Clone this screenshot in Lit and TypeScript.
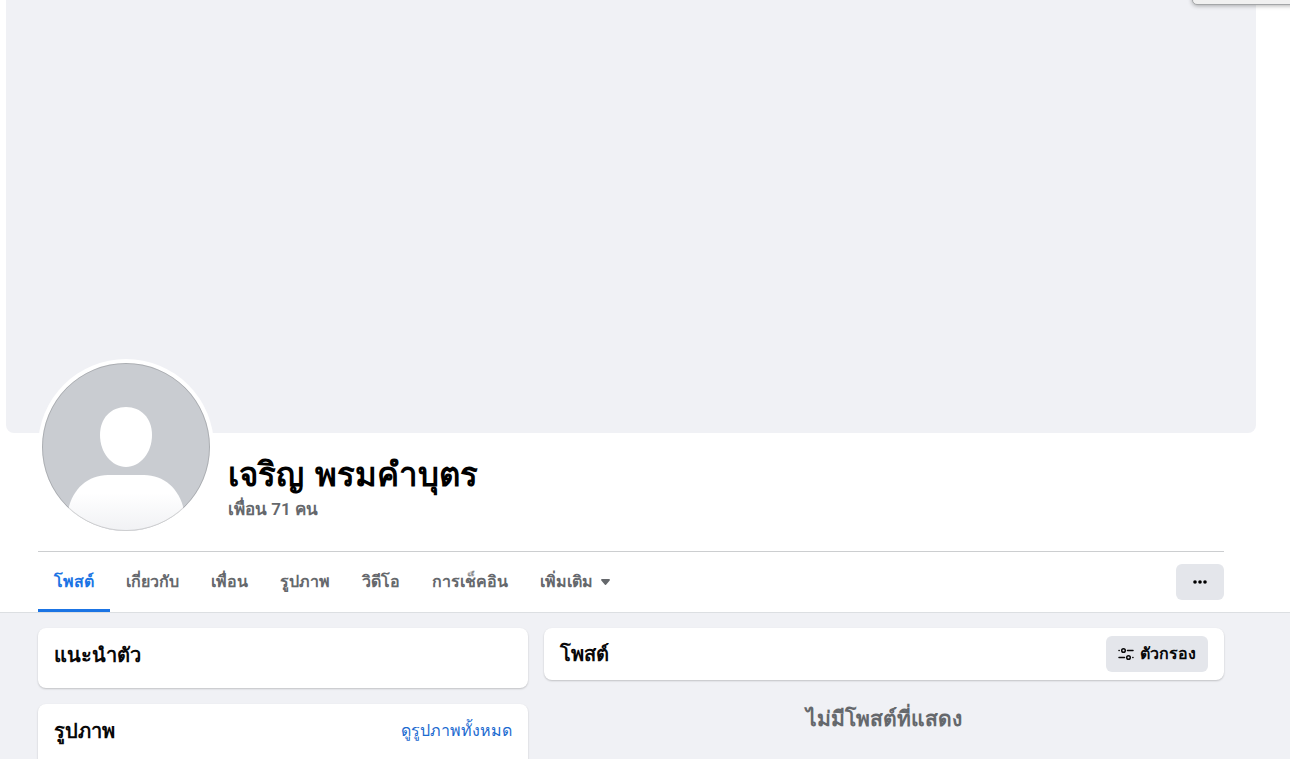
import { LitElement, html, css } from "lit";
import { customElement, state } from "lit/decorators.js";
import { classMap } from "lit/directives/class-map.js";

const TABS = ["โพสต์", "เกี่ยวกับ", "เพื่อน", "รูปภาพ", "วิดีโอ", "การเช็คอิน"];

@customElement("app-root")
export class AppRoot extends LitElement {
  static styles = css`
    :host {
      display: block;
      position: relative;
      min-height: 100vh;
      overflow: hidden;
      background: #f0f1f5;
      color: #080809;
      font-family: Roboto, "Liberation Sans", sans-serif;
      font-size: 16px;
      line-height: 20px;
    }
    h1, h2, p { margin: 0; }
    button { font: inherit; color: inherit; border: 0; cursor: pointer; }
    .header {
      background: #fff;
      padding-right: 28px;
      border-bottom: 1px solid #dcdfe2;
    }
    .frame { max-width: 1250px; margin: 0 auto; box-sizing: border-box; }
    .cover {
      height: 433px;
      background: #f0f1f5;
      border-radius: 0 0 8px 8px;
    }
    .inner { margin: 0 32px; }
    .profile {
      display: flex;
      gap: 14px;
      margin-top: -74px;
      padding-bottom: 16px;
      border-bottom: 1px solid #ccced0;
    }
    .avatar { display: block; width: 176px; height: 176px; flex: none; }
    .who { padding-top: 94px; }
    .name { font-family: "DejaVu Sans", sans-serif; font-size: 33px; line-height: 44px; font-weight: 700; color: #000; }
    .friends { display: block; font-size: 17px; line-height: 24px; font-weight: 600; color: #65686c; text-decoration: none; }
    .bar { display: flex; align-items: center; justify-content: space-between; }
    .tabs { display: flex; }
    .tab {
      display: flex;
      align-items: center;
      gap: 8px;
      height: 60px;
      box-sizing: border-box;
      padding: 3px 16px 0;
      border-bottom: 3px solid transparent;
      background: none;
      color: #65686c;
      font-weight: 600;
      white-space: nowrap;
    }
    .active { color: #1b74e4; border-bottom-color: #1b74e4; }
    .soft {
      display: flex;
      align-items: center;
      justify-content: center;
      gap: 6px;
      height: 36px;
      padding: 0 12px;
      border-radius: 6px;
      background: #e4e6eb;
      font-weight: 600;
    }
    .dots { width: 48px; }
    .body { padding-right: 28px; }
    .columns {
      display: grid;
      grid-template-columns: 490fr 680fr;
      gap: 16px;
      padding: 15px 32px 0;
      align-items: start;
    }
    .column { display: grid; gap: 16px; }
    .card {
      display: flex;
      justify-content: space-between;
      background: #fff;
      border-radius: 8px;
      box-shadow: 0 1px 2px rgba(0, 0, 0, 0.2);
      padding: 15px 16px 17px;
    }
    .intro { min-height: 28px; }
    .photos { min-height: 64px; }
    .posts { padding: 8px 16px; align-items: center; }
    .title { font-size: 20px; line-height: 24px; font-weight: 700; }
    .all { font-size: 16px; line-height: 24px; color: #1b6ad0; text-decoration: none; }
    .empty { font-size: 21px; line-height: 24px; padding-top: 11px; font-weight: 700; color: #65686c; text-align: center; }
    .popup {
      position: absolute;
      top: -20px;
      right: -10px;
      width: 106px;
      height: 23px;
      background: #f0f0f0;
      border: 1px solid #a4a6a8;
      border-radius: 5px;
      box-shadow: 0 1px 4px rgba(0, 0, 0, 0.3);
    }
  `;

  @state() private current = 0;

  render() {
    return html`
      <header class="header">
        <div class="frame">
          <div class="cover"></div>
          <div class="inner">
            <div class="profile">
              <svg class="avatar" viewBox="0 0 176 176" aria-hidden="true">
                <defs>
                  <clipPath id="face"><circle cx="88" cy="88" r="84" /></clipPath>
                  <linearGradient id="fade" x1="0" y1="0" x2="0" y2="1">
                    <stop offset="0.3" stop-color="#fff" />
                    <stop offset="1" stop-color="#eff0f3" />
                  </linearGradient>
                </defs>
                <circle cx="88" cy="88" r="88" fill="#fff" />
                <g clip-path="url(#face)">
                  <rect width="176" height="176" fill="#c9ccd1" />
                  <path fill="#fff" d="M88 48c15 0 26 11 26 28 0 18-12 32-26 32S62 94 62 76c0-17 11-28 26-28z" />
                  <path fill="url(#fade)" d="M30 152c4-22 20-36 40-36h36c20 0 36 14 40 36v24H30z" />
                </g>
                <circle cx="88" cy="88" r="83.5" fill="none" stroke="#000" stroke-opacity="0.15" />
              </svg>
              <div class="who">
                <h1 class="name">เจริญ พรมคำบุตร</h1>
                <a class="friends" href="#friends">เพื่อน 71 คน</a>
              </div>
            </div>
            <div class="bar">
              <nav class="tabs">
                ${TABS.map(
                  (label, i) => html`<button
                    class=${classMap({ tab: true, active: i === this.current })}
                    @click=${() => (this.current = i)}
                  >${label}</button>`
                )}
                <button class="tab">
                  เพิ่มเติม
                  <svg width="9" height="6" viewBox="0 0 9 6" aria-hidden="true">
                    <path fill="#65686c" d="M1 0h7c.9 0 1.200.9.700 1.500L5.300 5.500a1 1 0 0 1-1.600 0L.3 1.500C-.2.900.1 0 1 0z" />
                  </svg>
                </button>
              </nav>
              <button class="soft dots" aria-label="ตัวเลือกเพิ่มเติม">
                <svg width="14" height="4" viewBox="0 0 14 4" aria-hidden="true">
                  <circle cx="2" cy="2" r="1.800" /><circle cx="7" cy="2" r="1.800" /><circle cx="12" cy="2" r="1.800" />
                </svg>
              </button>
            </div>
          </div>
        </div>
      </header>
      <main class="body">
        <div class="frame columns">
          <div class="column">
            <section class="card intro"><h2 class="title">แนะนำตัว</h2></section>
            <section class="card photos">
              <h2 class="title">รูปภาพ</h2>
              <a class="all" href="#photos">ดูรูปภาพทั้งหมด</a>
            </section>
          </div>
          <div class="column">
            <section class="card posts">
              <h2 class="title">โพสต์</h2>
              <button class="soft">
                <svg width="16" height="16" viewBox="0 0 16 16" fill="none" stroke="#080809" stroke-width="1.500" stroke-linecap="round" aria-hidden="true">
                  <circle cx="5.500" cy="4.500" r="1.800" /><path d="M9.500 4.500h5.500M1 4.500h.2" />
                  <circle cx="10.500" cy="11.500" r="1.800" /><path d="M1 11.500h5.500M14.800 11.500h.2" />
                </svg>
                ตัวกรอง
              </button>
            </section>
            <p class="empty">ไม่มีโพสต์ที่แสดง</p>
          </div>
        </div>
      </main>
      <div class="popup"></div>
    `;
  }
}
